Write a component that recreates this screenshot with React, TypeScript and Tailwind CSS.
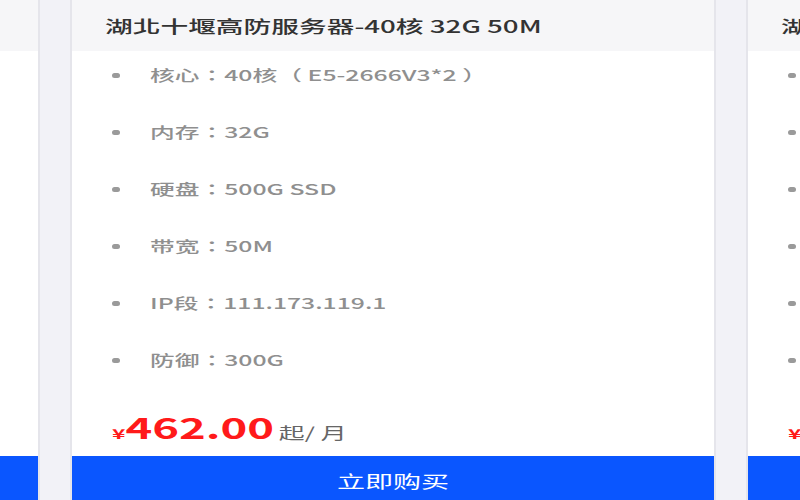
import React from "react";

const items = [
  "核心：40核（ E5-2666V3*2 ）",
  "内存：32G",
  "硬盘：500G SSD",
  "带宽：50M",
  "IP段：111.173.119.1",
  "防御：300G",
];

function Card() {
  return (
    <div className="w-[646px] shrink-0 h-[500px] flex flex-col bg-white border-x-2 border-[#e5e5eb]">
      <div className="h-[51px] shrink-0 bg-[#f6f6f8] flex items-center pl-[33px]">
        <span className="inline-block origin-left scale-x-[1.63] text-[17px] font-medium text-[#333333] whitespace-nowrap">
          湖北十堰高防服务器-40核 32G 50M
        </span>
      </div>
      <ul className="flex flex-col gap-[27px] pt-[9px]">
        {items.map((t) => (
          <li key={t} className="h-[30px] flex items-center pl-[40px]">
            <span className="w-[8px] h-[5px] rounded-full bg-[#9a9a9a] shrink-0" />
            <span className="ml-[30px] inline-block origin-left scale-x-[1.65] text-[15px] font-medium text-[#8f8f8f] whitespace-pre">
              {t}
            </span>
          </li>
        ))}
      </ul>
      <div className="mt-[32px] h-[40px] flex items-center pl-[40px]">
        <span className="inline-block origin-left scale-x-[1.62] whitespace-nowrap">
          <span className="text-[14px] font-bold text-[#ff1a1a]">¥</span>
          <span className="text-[28px] font-bold text-[#ff1a1a]">462.00</span>
          <span className="ml-[3px] text-[16px] text-[#666666]">起/ 月</span>
        </span>
      </div>
      <button className="mt-[9px] h-[50px] shrink-0 bg-[#0a56ff] flex justify-center pt-[12px]">
        <span className="inline-block origin-center scale-x-[1.65] text-[17px] text-white whitespace-nowrap">
          立即购买
        </span>
      </button>
    </div>
  );
}

export default function App() {
  return (
    <div
      className="w-[800px] h-[500px] overflow-hidden bg-[#f2f2f7]"
      style={{ fontFamily: '"Noto Sans CJK TC", "Noto Sans", sans-serif' }}
    >
      <div className="flex gap-[30px] ml-[-606px]">
        <Card />
        <Card />
        <Card />
      </div>
    </div>
  );
}
